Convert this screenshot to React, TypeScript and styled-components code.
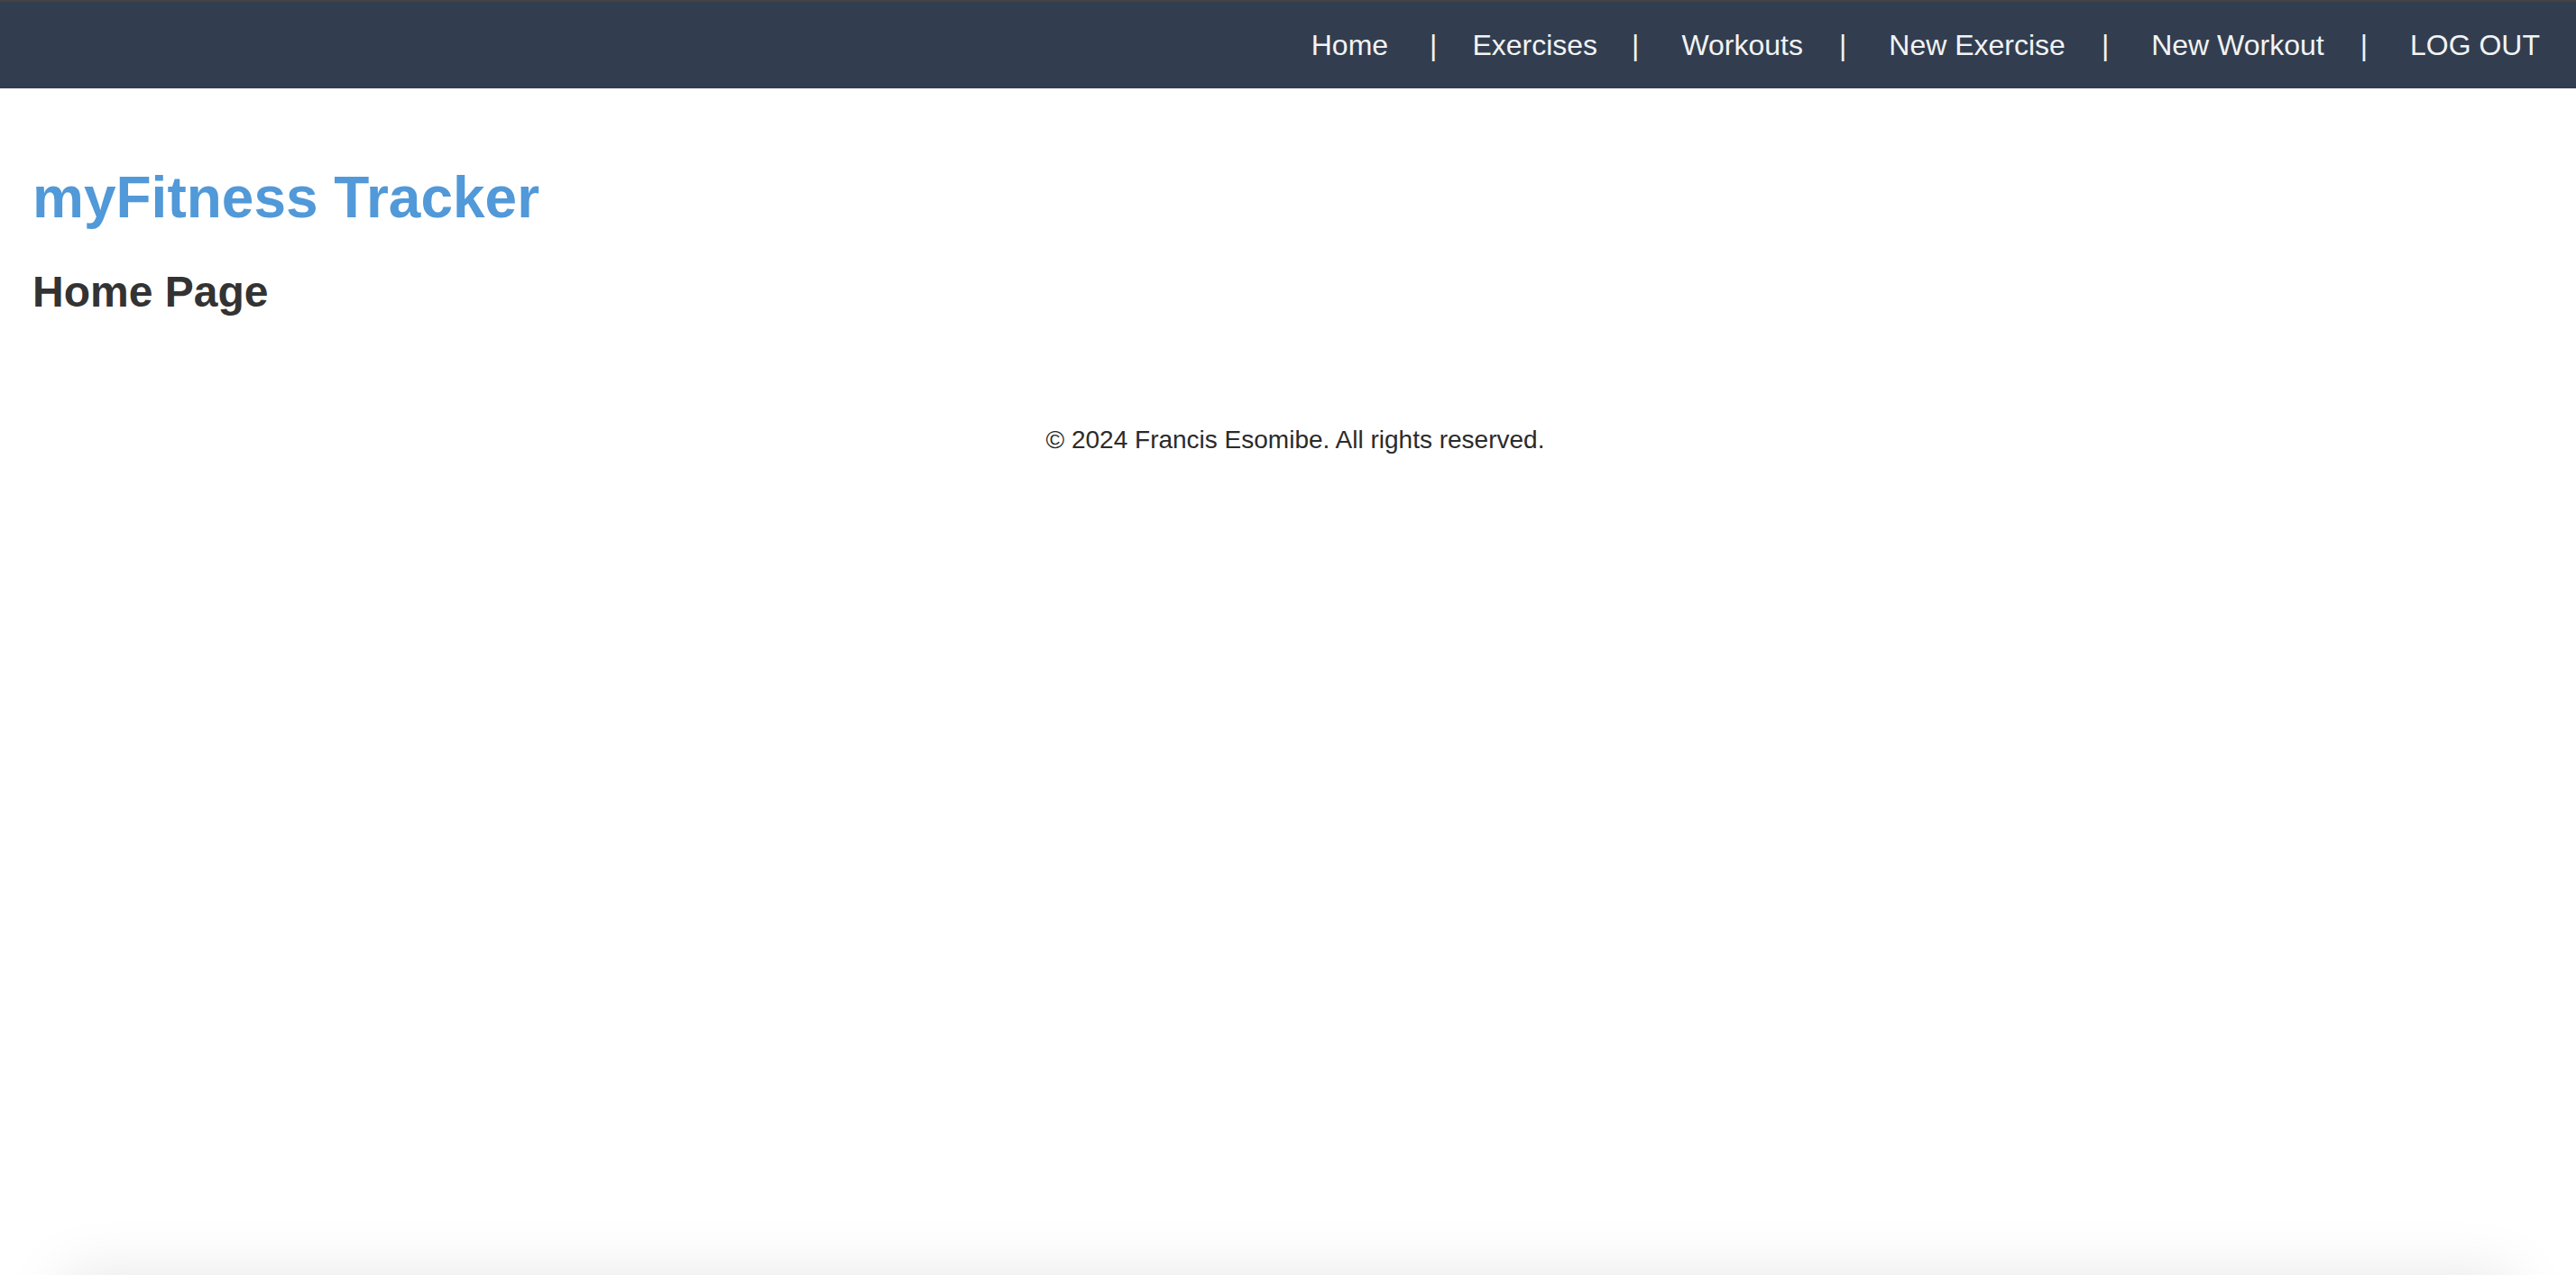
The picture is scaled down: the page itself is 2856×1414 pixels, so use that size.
import React from "react";
import styled, { createGlobalStyle } from "styled-components";

const GlobalStyle = createGlobalStyle`
  html, body {
    margin: 0;
    padding: 0;
    background: #ffffff;
    font-family: "Liberation Sans", Arial, Helvetica, sans-serif;
  }
`;

const Page = styled.div`
  display: flex;
  flex-direction: column;
  min-height: 100vh;
`;

const NavBar = styled.nav`
  display: flex;
  justify-content: flex-end;
  align-items: center;
  height: 96px;
  padding: 0 40px;
  background: #323e50;
  border-top: 2px solid #45423f;
`;

const NavLink = styled.a<{ $gap?: number }>`
  font-size: 32px;
  line-height: 1;
  color: #f2f3f4;
  text-decoration: none;
  margin-right: ${(p) => (p.$gap ?? 40)}px;
  cursor: pointer;
  &:last-child {
    margin-right: 0;
  }
`;

const Separator = styled.span<{ $gap?: number }>`
  font-size: 32px;
  line-height: 1;
  color: #f2f3f4;
  margin-right: ${(p) => (p.$gap ?? 47)}px;
`;

const Main = styled.main`
  display: flex;
  flex-direction: column;
  padding: 84px 36px 0;
`;

const Title = styled.h1`
  margin: 0 0 40px;
  font-size: 64px;
  font-weight: 700;
  color: #5199d8;
`;

const Subtitle = styled.h2`
  margin: 0;
  font-size: 48px;
  font-weight: 700;
  color: #333333;
`;

const Footer = styled.footer`
  display: flex;
  justify-content: center;
  padding: 121px 0 0 16px;
  font-size: 28px;
  color: #2b2b2b;
`;

const BottomShade = styled.div`
  position: fixed;
  left: 70px;
  right: 70px;
  top: 100%;
  height: 200px;
  box-shadow: 0 0 64px rgba(0, 0, 0, 0.1);
  pointer-events: none;
`;

const links = ["Home", "Exercises", "Workouts", "New Exercise", "New Workout", "LOG OUT"];
const linkGaps = [46, 38, 40, 40, 40, 0];
const sepGaps = [39, 47, 47, 47, 47];

export default function App() {
  return (
    <Page>
      <GlobalStyle />
      <NavBar>
        {links.map((label, i) => (
          <React.Fragment key={label}>
            <NavLink $gap={linkGaps[i]}>{label}</NavLink>
            {i < links.length - 1 && <Separator $gap={sepGaps[i]}>|</Separator>}
          </React.Fragment>
        ))}
      </NavBar>
      <Main>
        <Title>myFitness Tracker</Title>
        <Subtitle>Home Page</Subtitle>
      </Main>
      <Footer>© 2024 Francis Esomibe. All rights reserved.</Footer>
      <BottomShade />
    </Page>
  );
}
